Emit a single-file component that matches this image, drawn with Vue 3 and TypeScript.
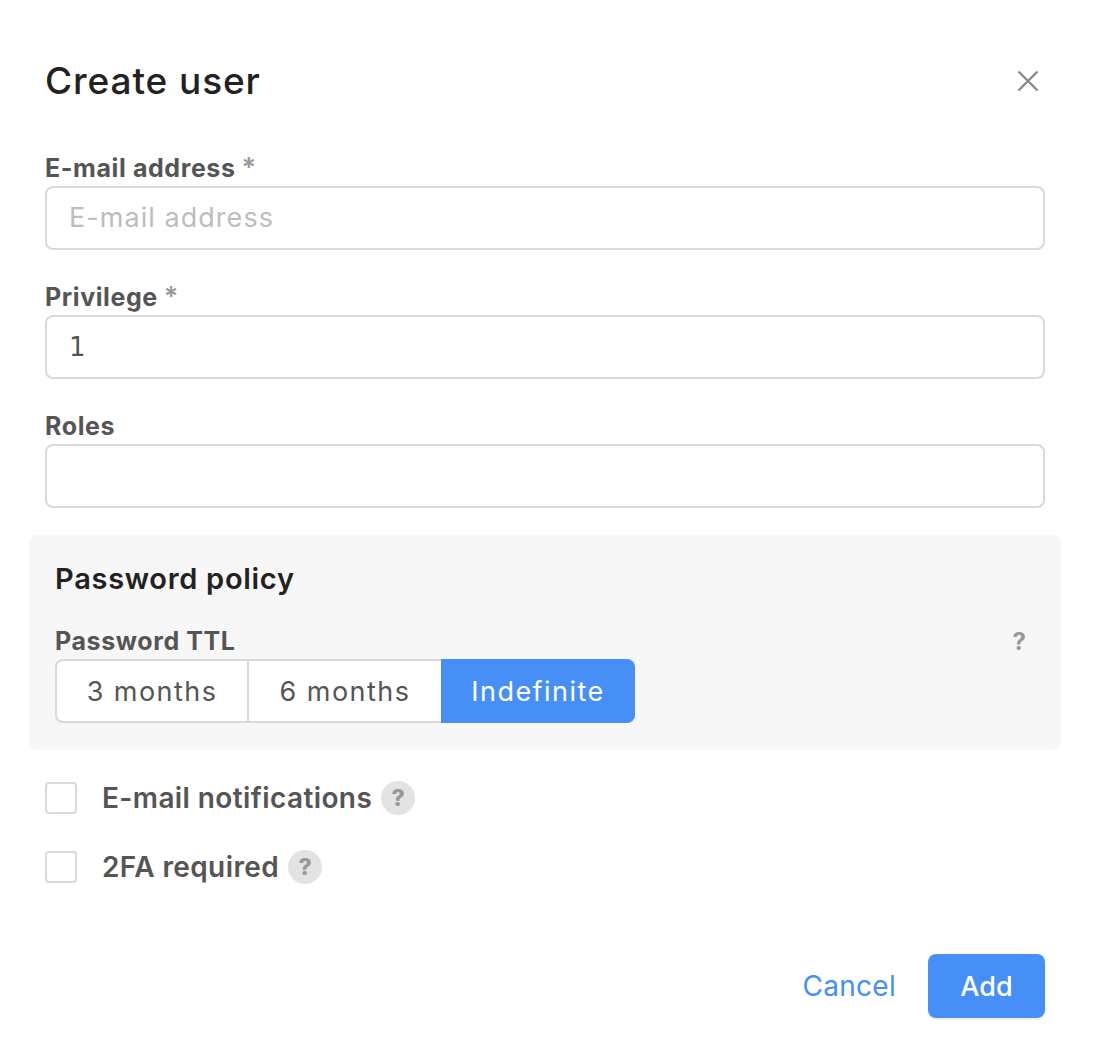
<script setup lang="ts">
type Field = { label: string; required: boolean; placeholder?: string; value?: string };
type Check = { label: string };

const fields: Field[] = [
  { label: "E-mail address", required: true, placeholder: "E-mail address" },
  { label: "Privilege", required: true, value: "1" },
  { label: "Roles", required: false },
];
const ttlOptions = ["3 months", "6 months", "Indefinite"];
const checks: Check[] = [{ label: "E-mail notifications" }, { label: "2FA required" }];
</script>

<template>
  <div class="modal">
    <header class="head">
      <h1>Create user</h1>
      <button class="close" type="button" aria-label="Close">
        <svg width="22" height="22" viewBox="0 0 22 22">
          <path d="M1.5 1.5 20.5 20.5M20.5 1.5 1.5 20.5" stroke="#8a8a8a" stroke-width="2.4" fill="none" />
        </svg>
      </button>
    </header>

    <div v-for="f in fields" :key="f.label" class="field">
      <label class="label">{{ f.label }}<span v-if="f.required" class="req">*</span></label>
      <input class="input" type="text" :placeholder="f.placeholder" :value="f.value" />
    </div>

    <section class="policy">
      <h2>Password policy</h2>
      <div class="ttl-head">
        <span class="label">Password TTL</span>
        <span class="hint">?</span>
      </div>
      <div class="segments">
        <button
          v-for="(o, i) in ttlOptions"
          :key="o"
          type="button"
          :class="['segment', { active: i === 2 }]"
        >
          {{ o }}
        </button>
      </div>
    </section>

    <div v-for="c in checks" :key="c.label" class="check">
      <span class="box"></span>
      <span class="check-label">{{ c.label }}</span>
      <span class="help">?</span>
    </div>

    <footer class="foot">
      <button class="cancel" type="button">Cancel</button>
      <button class="add" type="button">Add</button>
    </footer>
  </div>
</template>

<style scoped>
.modal {
  box-sizing: border-box;
  width: 1095px;
  height: 1047px;
  padding: 0 50px 0 45px;
  background: #fff;
  font-family: Inter, "Noto Sans", sans-serif;
  color: #555;
}
.head {
  display: flex;
  justify-content: space-between;
  align-items: center;
  height: 42px;
  padding-top: 60px;
  margin-bottom: 51px;
}
h1 {
  margin: 0;
  font-size: 37px;
  line-height: 42px;
  font-weight: 500;
  letter-spacing: 0.9px;
  color: #222;
}
.close {
  display: flex;
  padding: 0;
  margin-right: 6px;
  border: 0;
  background: none;
}
.field + .field {
  margin-top: 32px;
}
.label {
  display: block;
  font-size: 25px;
  line-height: 30px;
  font-weight: 700;
  letter-spacing: 0.6px;
  color: #555;
}
.req {
  margin-left: 6px;
  font-size: 27px;
  line-height: 0;
  font-weight: 600;
  color: #999;
}
.input {
  box-sizing: border-box;
  display: block;
  width: 100%;
  height: 64px;
  margin-top: 3px;
  padding: 0 22px;
  border: 2px solid #d9d9d9;
  border-radius: 8px;
  background: #fff;
  font: 400 26px "DejaVu Sans", sans-serif;
  color: #555;
  outline: none;
}
.input::placeholder {
  font-family: Inter, "Noto Sans", sans-serif;
  font-size: 27px;
  letter-spacing: 1.05px;
  color: #bdbdbd;
}
.policy {
  margin: 27px -16px 0 -16px;
  padding: 26px 26px 27px;
  height: 215px;
  box-sizing: border-box;
  background: #f7f7f7;
  border-radius: 8px;
}
h2 {
  margin: 0;
  font-size: 29px;
  line-height: 36px;
  font-weight: 600;
  letter-spacing: 0.7px;
  color: #222;
}
.ttl-head {
  display: flex;
  justify-content: space-between;
  align-items: center;
  margin-top: 29px;
}
.hint {
  margin-right: 9px;
  font-size: 24px;
  font-weight: 700;
  color: #999;
}
.segments {
  display: inline-flex;
  margin-top: 3px;
}
.segment {
  box-sizing: border-box;
  width: 192px;
  height: 64px;
  padding: 0;
  border: 2px solid #d9d9d9;
  border-width: 2px 0;
  background: #fff;
  font: 400 27px Inter, "Noto Sans", sans-serif;
  letter-spacing: 1.45px;
  color: #555;
}
.segment:first-child {
  width: 194px;
  border-width: 2px;
  border-radius: 8px 0 0 8px;
}
.segment.active {
  width: 194px;
  border-color: #458ff7;
  border-radius: 0 8px 8px 0;
  background: #458ff7;
  color: #fff;
}
.check {
  display: flex;
  align-items: center;
  height: 34px;
  margin-top: 35px;
}
.policy + .check {
  margin-top: 31px;
}
.box {
  box-sizing: border-box;
  width: 32px;
  height: 32px;
  border: 2px solid #d9d9d9;
  border-radius: 4px;
  margin-right: 25px;
}
.check-label {
  font-size: 28px;
  font-weight: 600;
  letter-spacing: 0.4px;
  color: #555;
}
.help {
  display: flex;
  align-items: center;
  justify-content: center;
  width: 34px;
  height: 34px;
  margin-left: 9px;
  border-radius: 50%;
  background: #e3e3e3;
  font-size: 23px;
  font-weight: 800;
  color: #999;
}
.foot {
  display: flex;
  justify-content: flex-end;
  align-items: center;
  gap: 32px;
  margin-top: 70px;
}
.cancel {
  padding: 0;
  border: 0;
  background: none;
  font: 400 28px Inter, "Noto Sans", sans-serif;
  letter-spacing: 0.3px;
  color: #458ff7;
}
.add {
  width: 117px;
  height: 64px;
  border: 0;
  border-radius: 8px;
  background: #458ff7;
  box-shadow: 0 2px 0 #f0f0f0;
  font: 500 27px Inter, "Noto Sans", sans-serif;
  color: #fff;
}
</style>
